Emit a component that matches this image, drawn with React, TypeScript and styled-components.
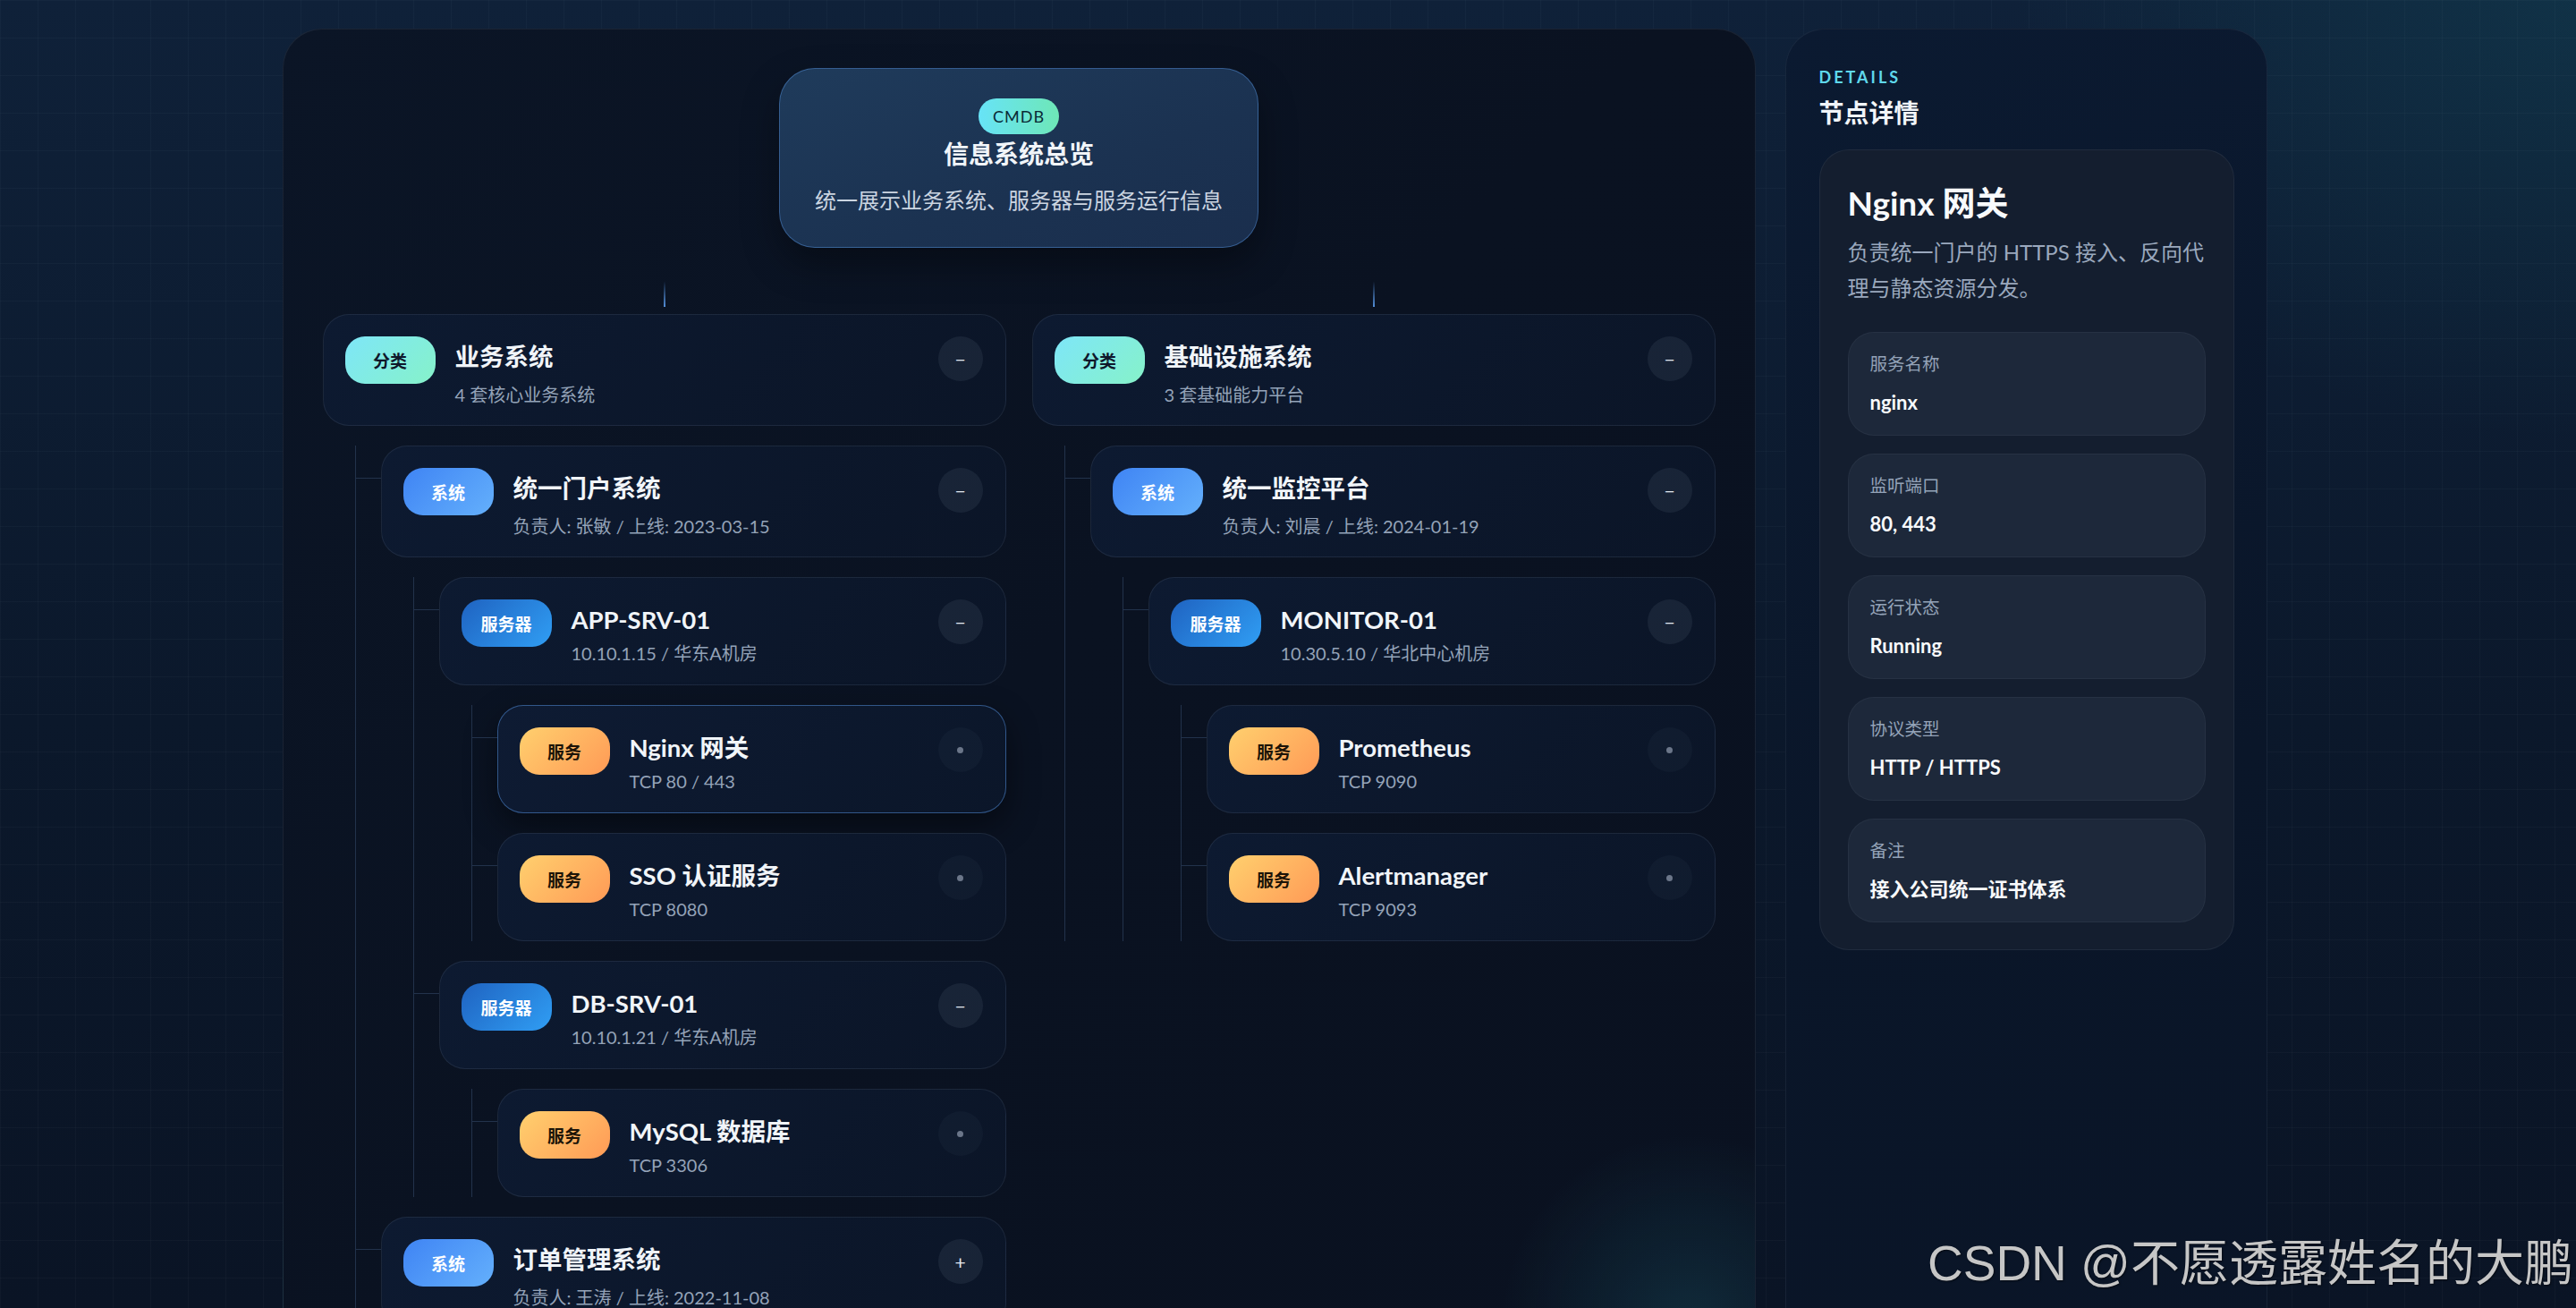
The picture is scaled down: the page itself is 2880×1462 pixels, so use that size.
import React, { useState } from 'react'
import styled, { createGlobalStyle, css } from 'styled-components'

const FONT = `Lato, "Noto Sans CJK SC", "Noto Sans", sans-serif`
const LINE = '#22324b'

type Kind = 'category' | 'system' | 'server' | 'service'

interface Field {
  label: string
  value: string
}

interface TreeItem {
  id: string
  kind: Kind
  title: string
  sub: string
  desc?: string
  fields?: Field[]
  children?: TreeItem[]
}

const KIND_LABEL: Record<Kind, string> = {
  category: '分类',
  system: '系统',
  server: '服务器',
  service: '服务',
}

const branches: TreeItem[] = [
  {
    id: 'biz',
    kind: 'category',
    title: '业务系统',
    sub: '4 套核心业务系统',
    children: [
      {
        id: 'portal',
        kind: 'system',
        title: '统一门户系统',
        sub: '负责人: 张敏 / 上线: 2023-03-15',
        children: [
          {
            id: 'app-srv-01',
            kind: 'server',
            title: 'APP-SRV-01',
            sub: '10.10.1.15 / 华东A机房',
            children: [
              {
                id: 'nginx',
                kind: 'service',
                title: 'Nginx 网关',
                sub: 'TCP 80 / 443',
                desc: '负责统一门户的 HTTPS 接入、反向代理与静态资源分发。',
                fields: [
                  { label: '服务名称', value: 'nginx' },
                  { label: '监听端口', value: '80, 443' },
                  { label: '运行状态', value: 'Running' },
                  { label: '协议类型', value: 'HTTP / HTTPS' },
                  { label: '备注', value: '接入公司统一证书体系' },
                ],
              },
              { id: 'sso', kind: 'service', title: 'SSO 认证服务', sub: 'TCP 8080' },
            ],
          },
          {
            id: 'db-srv-01',
            kind: 'server',
            title: 'DB-SRV-01',
            sub: '10.10.1.21 / 华东A机房',
            children: [{ id: 'mysql', kind: 'service', title: 'MySQL 数据库', sub: 'TCP 3306' }],
          },
        ],
      },
      {
        id: 'order',
        kind: 'system',
        title: '订单管理系统',
        sub: '负责人: 王涛 / 上线: 2022-11-08',
        children: [
          { id: 'order-srv-01', kind: 'server', title: 'ORDER-SRV-01', sub: '10.10.2.11 / 华东A机房' },
        ],
      },
      {
        id: 'crm',
        kind: 'system',
        title: '客户服务系统',
        sub: '负责人: 李娜 / 上线: 2021-06-30',
        children: [{ id: 'crm-srv-01', kind: 'server', title: 'CRM-SRV-01', sub: '10.10.3.8 / 华东B机房' }],
      },
      {
        id: 'finance',
        kind: 'system',
        title: '财务结算系统',
        sub: '负责人: 陈亮 / 上线: 2020-09-12',
        children: [{ id: 'fin-srv-01', kind: 'server', title: 'FIN-SRV-01', sub: '10.10.4.6 / 华东B机房' }],
      },
    ],
  },
  {
    id: 'infra',
    kind: 'category',
    title: '基础设施系统',
    sub: '3 套基础能力平台',
    children: [
      {
        id: 'monitor',
        kind: 'system',
        title: '统一监控平台',
        sub: '负责人: 刘晨 / 上线: 2024-01-19',
        children: [
          {
            id: 'monitor-01',
            kind: 'server',
            title: 'MONITOR-01',
            sub: '10.30.5.10 / 华北中心机房',
            children: [
              { id: 'prometheus', kind: 'service', title: 'Prometheus', sub: 'TCP 9090' },
              { id: 'alertmanager', kind: 'service', title: 'Alertmanager', sub: 'TCP 9093' },
            ],
          },
        ],
      },
    ],
  },
]

const findNode = (items: TreeItem[], id: string): TreeItem | undefined => {
  for (const item of items) {
    if (item.id === id) return item
    const hit = item.children ? findNode(item.children, id) : undefined
    if (hit) return hit
  }
  return undefined
}

const GlobalStyle = createGlobalStyle`
  *, *::before, *::after {
    box-sizing: border-box;
  }
  html, body {
    margin: 0;
    height: 100%;
    overflow: hidden;
    background: #0b1628;
    font-family: ${FONT};
  }
  #root {
    height: 100%;
  }
`

const App: React.FC = () => {
  const [selectedId, setSelectedId] = useState('nginx')
  const [collapsed, setCollapsed] = useState<Set<string>>(
    () => new Set(['order', 'crm', 'finance']),
  )

  const onToggle = (id: string) => {
    setCollapsed((prev) => {
      const next = new Set(prev)
      if (next.has(id)) next.delete(id)
      else next.add(id)
      return next
    })
  }

  const selected = findNode(branches, selectedId)
  const fields: Field[] = selected?.fields || [
    { label: '节点类型', value: selected ? KIND_LABEL[selected.kind] : '-' },
    { label: '概要信息', value: selected ? selected.sub : '-' },
  ]

  return (
    <Page>
      <GlobalStyle />
      <Layout>
        <MainPanel>
          <RootCard>
            <RootBadge>CMDB</RootBadge>
            <RootTitle>信息系统总览</RootTitle>
            <RootSub>统一展示业务系统、服务器与服务运行信息</RootSub>
          </RootCard>
          <BranchGrid>
            {branches.map((branch) => (
              <Branch key={branch.id}>
                <Connector />
                <TreeNode
                  node={branch}
                  selectedId={selectedId}
                  onSelect={setSelectedId}
                  collapsed={collapsed}
                  onToggle={onToggle}
                />
              </Branch>
            ))}
          </BranchGrid>
        </MainPanel>

        <Aside>
          <Eyebrow>DETAILS</Eyebrow>
          <AsideTitle>节点详情</AsideTitle>
          <DetailCard>
            <DetailName>{selected?.title}</DetailName>
            <DetailDesc>{selected?.desc || selected?.sub}</DetailDesc>
            <FieldList>
              {fields.map((f) => (
                <FieldBox key={f.label}>
                  <FieldLabel>{f.label}</FieldLabel>
                  <FieldValue>{f.value}</FieldValue>
                </FieldBox>
              ))}
            </FieldList>
          </DetailCard>
        </Aside>
      </Layout>
      <Watermark>CSDN @不愿透露姓名的大鹏</Watermark>
    </Page>
  )
}

interface TreeNodeProps {
  node: TreeItem
  selectedId: string
  onSelect: (id: string) => void
  collapsed: Set<string>
  onToggle: (id: string) => void
}

const TreeNode: React.FC<TreeNodeProps> = ({ node, selectedId, onSelect, collapsed, onToggle }) => {
  const hasChildren = !!node.children && node.children.length > 0
  const isOpen = hasChildren && !collapsed.has(node.id)
  const dense = node.kind === 'server' || node.kind === 'service'

  return (
    <>
      <NodeCard $selected={selectedId === node.id} $dense={dense} onClick={() => onSelect(node.id)}>
        <KindBadge $kind={node.kind}>{KIND_LABEL[node.kind]}</KindBadge>
        <NodeText>
          <NodeTitle>{node.title}</NodeTitle>
          <NodeSub $dense={dense}>{node.sub}</NodeSub>
        </NodeText>
        <ToggleButton
          $leaf={!hasChildren}
          onClick={(e) => {
            e.stopPropagation()
            if (hasChildren) onToggle(node.id)
          }}
        >
          {hasChildren ? (isOpen ? '−' : '+') : <LeafDot />}
        </ToggleButton>
      </NodeCard>
      {isOpen && (
        <Children>
          {node.children!.map((child) => (
            <ChildItem key={child.id}>
              <TreeNode
                node={child}
                selectedId={selectedId}
                onSelect={onSelect}
                collapsed={collapsed}
                onToggle={onToggle}
              />
            </ChildItem>
          ))}
        </Children>
      )}
    </>
  )
}

// the right padding keeps the columns where they sit beside a 30px scrollbar
const Page = styled.div`
  height: 100vh;
  overflow-y: auto;
  padding-right: 30px;
  background-color: #0b1628;
  background-image:
    linear-gradient(rgba(148, 163, 184, 0.045) 1px, transparent 1px),
    linear-gradient(90deg, rgba(148, 163, 184, 0.045) 1px, transparent 1px),
    radial-gradient(ellipse 900px 700px at 100% 0%, rgba(22, 110, 120, 0.22), transparent 70%),
    linear-gradient(180deg, #0f2139 0%, #0b182b 55%, #0a1425 100%);
  background-size: 42px 42px, 42px 42px, 100% 100%, 100% 100%;

  &::-webkit-scrollbar {
    width: 30px;
  }
  &::-webkit-scrollbar-track {
    background: #fdfdfd;
  }
  &::-webkit-scrollbar-thumb {
    background: #8e8e8e;
    border-radius: 15px;
    border: 6px solid #fdfdfd;
  }
  &::-webkit-scrollbar-button:single-button {
    display: block;
    height: 30px;
    background-color: #fdfdfd;
    background-repeat: no-repeat;
    background-size: 9px 13px;
  }
  &::-webkit-scrollbar-button:single-button:vertical:decrement {
    background-image:
      linear-gradient(to top left, #8e8e8e 50%, transparent 50%),
      linear-gradient(to top right, #8e8e8e 50%, transparent 50%);
    background-position: 6px 9px, 15px 9px;
  }
  &::-webkit-scrollbar-button:single-button:vertical:increment {
    background-image:
      linear-gradient(to bottom left, #8e8e8e 50%, transparent 50%),
      linear-gradient(to bottom right, #8e8e8e 50%, transparent 50%);
    background-position: 6px 8px, 15px 8px;
  }
`

const Layout = styled.div`
  display: grid;
  grid-template-columns: 1647px 539px;
  gap: 33px;
  width: 2219px;
  margin: 0 auto;
  padding: 32px 0;
`

const MainPanel = styled.section`
  padding: 43px 44px 44px;
  border-radius: 44px;
  border: 1px solid rgba(148, 163, 184, 0.12);
  background:
    radial-gradient(circle 280px at 1571px 1445px, rgba(45, 170, 190, 0.16), transparent 75%),
    linear-gradient(135deg, #0b1526 0%, #0a1221 45%, #0a1120 100%);
`

const RootCard = styled.div`
  width: fit-content;
  margin: 0 auto;
  padding: 33px 39px 35px;
  display: flex;
  flex-direction: column;
  align-items: center;
  border-radius: 40px;
  border: 1px solid rgba(96, 165, 250, 0.38);
  background: linear-gradient(160deg, #1f3b5b 0%, #1b3251 60%, #1a2e4d 100%);
  box-shadow: 0 18px 40px rgba(0, 0, 0, 0.35);
`

const RootBadge = styled.span`
  height: 40px;
  padding: 0 16px;
  display: flex;
  align-items: center;
  border-radius: 20px;
  background: linear-gradient(90deg, #67e3f7, #6ee7b7);
  color: #0a2a36;
  font-size: 18px;
  letter-spacing: 1px;
`

const RootTitle = styled.h1`
  margin: 4px 0 0;
  font-size: 28px;
  line-height: 36px;
  font-weight: 700;
  color: #f1f5f9;
`

const RootSub = styled.p`
  margin: 17px 0 0;
  font-size: 24px;
  line-height: 34px;
  color: #cbd5e1;
  white-space: nowrap;
`

const BranchGrid = styled.div`
  margin-top: 22px;
  display: grid;
  grid-template-columns: 1fr 1fr;
  gap: 29px;
  align-items: start;
`

const Branch = styled.div`
  display: flex;
  flex-direction: column;
`

const Connector = styled.div`
  width: 2px;
  height: 44px;
  margin: 0 auto 8px;
  background: linear-gradient(180deg, rgba(96, 165, 250, 0) 35%, rgba(96, 165, 250, 0.85) 100%);
`

const NodeCard = styled.div<{ $selected?: boolean; $dense?: boolean }>`
  display: flex;
  align-items: flex-start;
  gap: 22px;
  padding: 24px 25px ${(p) => (p.$dense ? 22 : 21)}px 24px;
  border-radius: 29px;
  border: 1px solid rgba(148, 163, 184, 0.13);
  background: linear-gradient(135deg, #0d1a31 0%, #0b1527 100%);
  cursor: pointer;
  ${(p) =>
    p.$selected &&
    css`
      border-color: rgba(96, 165, 250, 0.45);
      background: linear-gradient(135deg, #0e1b33 0%, #0b1629 100%);
      box-shadow: 0 14px 36px rgba(0, 0, 0, 0.45);
    `}
`

const badgeColors: Record<Kind, string> = {
  category: 'background: linear-gradient(135deg, #7ee6f8 0%, #86f2c9 100%); color: #0f172a;',
  system: 'background: linear-gradient(135deg, #3f84f4 0%, #64b0fc 100%); color: #ffffff;',
  server: 'background: linear-gradient(135deg, #1f63c1 0%, #309ef4 100%); color: #ffffff;',
  service: 'background: linear-gradient(135deg, #ffd06e 0%, #ff9a56 100%); color: #1c1408;',
}

const KindBadge = styled.span<{ $kind: Kind }>`
  flex-shrink: 0;
  width: 101px;
  height: 53px;
  display: flex;
  align-items: center;
  justify-content: center;
  border-radius: 22px;
  font-size: 19px;
  font-weight: 700;
  ${(p) => badgeColors[p.$kind]}
`

const NodeText = styled.div`
  flex: 1;
  min-width: 0;
  padding-top: 4px;
`

const NodeTitle = styled.div`
  font-size: 27.5px;
  line-height: 38px;
  font-weight: 700;
  color: #f1f5f9;
`

const NodeSub = styled.div<{ $dense?: boolean }>`
  margin-top: ${(p) => (p.$dense ? 5 : 10)}px;
  font-size: 20px;
  line-height: 26px;
  color: #94a3b8;
`

const ToggleButton = styled.button<{ $leaf?: boolean }>`
  flex-shrink: 0;
  width: 50px;
  height: 50px;
  margin-left: auto;
  padding: 0;
  display: flex;
  align-items: center;
  justify-content: center;
  border: none;
  border-radius: 50%;
  background: ${(p) => (p.$leaf ? 'rgba(148, 163, 184, 0.045)' : 'rgba(148, 163, 184, 0.1)')};
  color: #e2e8f0;
  font-family: ${FONT};
  font-size: 21px;
  font-weight: 400;
  cursor: ${(p) => (p.$leaf ? 'default' : 'pointer')};
`

const LeafDot = styled.span`
  width: 7px;
  height: 7px;
  border-radius: 50%;
  background: #6b7689;
`

const Children = styled.div`
  margin: 22px 0 0 36px;
  padding-left: 28px;
  border-left: 1px solid ${LINE};
  display: flex;
  flex-direction: column;
  gap: 22px;
`

const ChildItem = styled.div`
  position: relative;

  &::before {
    content: '';
    position: absolute;
    left: -29px;
    top: 36px;
    width: 29px;
    height: 1px;
    background: ${LINE};
  }
`

const Aside = styled.aside`
  padding: 41px 36px 36px 37px;
  border-radius: 44px;
  border: 1px solid rgba(148, 163, 184, 0.1);
  background: linear-gradient(160deg, #0b1a31 0%, #0a1629 50%, #0a1426 100%);
`

const Eyebrow = styled.div`
  font-size: 18px;
  line-height: 24px;
  font-weight: 700;
  letter-spacing: 3px;
  color: #5fd8ec;
`

const AsideTitle = styled.h2`
  margin: 10px 0 0;
  font-size: 28px;
  line-height: 36px;
  font-weight: 700;
  color: #f1f5f9;
`

const DetailCard = styled.div`
  margin-top: 23px;
  padding: 35px 31px 30px;
  border-radius: 33px;
  border: 1px solid rgba(148, 163, 184, 0.1);
  background: #141e2f;
`

const DetailName = styled.h3`
  margin: 0;
  font-size: 37px;
  line-height: 48px;
  font-weight: 700;
  color: #f8fafc;
`

const DetailDesc = styled.p`
  margin: 11px 0 0;
  font-size: 24px;
  line-height: 40px;
  color: #9aa8bd;
`

const FieldList = styled.div`
  margin-top: 29px;
  display: flex;
  flex-direction: column;
  gap: 20px;
`

const FieldBox = styled.div`
  padding: 21px 24px;
  border-radius: 29px;
  border: 1px solid rgba(148, 163, 184, 0.08);
  background: #1d283a;
`

const FieldLabel = styled.div`
  font-size: 19.5px;
  line-height: 28px;
  color: #94a3b8;
`

const FieldValue = styled.div`
  margin-top: 14px;
  font-size: 22px;
  line-height: 30px;
  font-weight: 700;
  color: #f8fafc;
`

const Watermark = styled.div`
  position: fixed;
  left: 2155px;
  bottom: 22px;
  font-family: "Liberation Sans", "Noto Sans CJK SC", sans-serif;
  font-size: 55px;
  line-height: 55px;
  white-space: nowrap;
  color: #c6c6c6;
  text-shadow: 1px 1px 2px rgba(0, 0, 0, 0.55);
  pointer-events: none;
`

export default App
